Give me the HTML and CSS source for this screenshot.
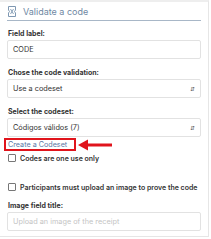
FILE: index.html
```html
<!DOCTYPE html>
<html>
<head>
    <meta charset="UTF-8">
    <title>Validate a code</title>
    <link rel="stylesheet" href="styles.css">
</head>
<body>
    <div class="panel">
        <div class="panel-head">
            <svg class="head-icon" width="8" height="11" viewBox="0 0 8 11">
                <path d="M0.5 0.5h7v3.5l-1 1.5 1 1.5v3.5h-7v-3.5l1-1.5-1-1.5z" fill="none" stroke="#7f98b2" stroke-width="1"/>
                <path d="M2.5 3l3 5M5.5 3l-3 5" fill="none" stroke="#7f98b2" stroke-width="0.9"/>
            </svg>
            <span>Validate a code</span>
        </div>

        <label class="field-label first">Field label:</label>
        <div class="input">CODE</div>

        <label class="field-label">Chose the code validation:</label>
        <div class="input select">Use a codeset<span class="arrows">&#8693;</span></div>

        <label class="field-label">Select the codeset:</label>
        <div class="input select">Códigos válidos (7)<span class="arrows">&#8693;</span></div>

        <div class="link-row">
            <a class="create-link">Create a Codeset</a>
            <svg class="pointer" width="36" height="12" viewBox="0 0 36 12">
                <path d="M10 6h25" stroke="#e0141c" stroke-width="3"/>
                <path d="M1 6l10-5.5v11z" fill="#e0141c"/>
            </svg>
        </div>

        <div class="check-row">
            <span class="box"></span>
            <span class="check-text">Codes are one use only</span>
        </div>
        <div class="check-row second">
            <span class="box"></span>
            <span class="check-text">Participants must upload an image to prove the code</span>
        </div>

        <label class="field-label">Image field title:</label>
        <div class="input placeholder">Upload an image of the receipt</div>
    </div>
</body>
</html>
```

FILE: styles.css
```css
body {
    margin: 0;
    background: #fff;
    font-family: Inter, "Noto Sans", sans-serif;
    color: #222;
}

.panel {
    width: 209px;
    height: 237px;
    border-top: 2px solid #eeeeee;
    border-right: 1px solid #e6e6e6;
    border-bottom: 1px solid #e6e6e6;
    padding: 0 7px;
    box-sizing: border-box;
}

.panel-head {
    display: flex;
    align-items: center;
    gap: 7px;
    height: 18px;
    padding-left: 1px;
    border-bottom: 1px solid #a8b7c7;
    color: #6f88a3;
    font-size: 9px;
}

.head-icon {
    flex: none;
}

.field-label {
    display: block;
    height: 10px;
    line-height: 10px;
    margin: 9px 0 1px 1px;
    font-size: 7px;
    font-weight: 700;
    color: #333;
}

.field-label.first {
    margin-top: 8px;
}

.input {
    height: 19px;
    border: 1px solid #e2e2e2;
    border-radius: 2px;
    padding: 0 5px;
    display: flex;
    align-items: center;
    box-sizing: border-box;
    font-size: 7.3px;
    color: #333;
}

.select {
    justify-content: space-between;
}

.arrows {
    font-size: 6px;
    color: #555;
}

.placeholder {
    color: #c4c4c4;
}

.link-row {
    display: flex;
    align-items: center;
    margin: 1px 0 0 -3px;
}

.create-link {
    display: block;
    width: 72px;
    height: 13px;
    box-sizing: border-box;
    border: 2px solid #e0141c;
    padding-left: 2px;
    line-height: 9px;
    font-size: 7.2px;
    color: #5a78a6;
}

.pointer {
    display: block;
    margin-left: 1px;
}

.check-row {
    display: flex;
    justify-content: flex-start;
    align-items: center;
    height: 10px;
    margin-top: 2px;
}

.check-row.second {
    margin-top: 19px;
}

.check-text {
    font-size: 7px;
    font-weight: 600;
    color: #333;
    white-space: nowrap;
}

.box {
    display: block;
    flex: none;
    width: 8px;
    height: 8px;
    box-sizing: border-box;
    border: 1px solid #777;
    border-radius: 1px;
    margin: 0 4px 0 1px;
}
```
